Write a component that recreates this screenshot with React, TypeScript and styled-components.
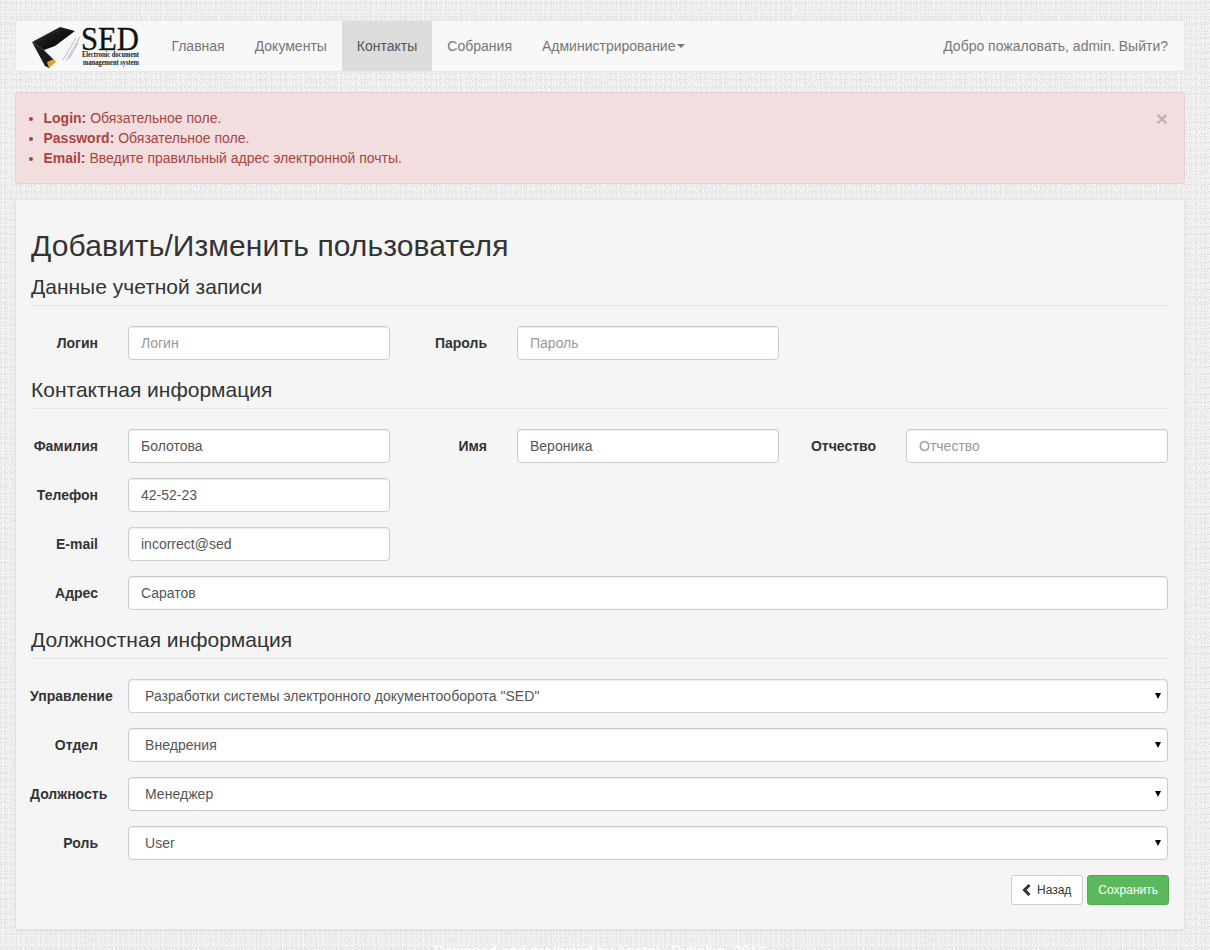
import React from 'react';
import styled, { createGlobalStyle } from 'styled-components';

// one pixel per tile, the tile sizes are co-prime so the dots never line up
const dot = (color: string) => `conic-gradient(from 270deg at 1px 1px, ${color} 25%, transparent 0)`;

const GlobalStyle = createGlobalStyle`
  html, body {
    margin: 0;
    padding: 0;
  }
  body {
    font-family: "Liberation Sans", Arial, sans-serif;
    font-size: 14px;
    line-height: 20px;
    color: #333;
    background-color: #eeeeef;
    background-image:
      ${dot('#fbfbfb')}, ${dot('#dcdce0')}, ${dot('#f8f8f9')}, ${dot('#dedee2')},
      ${dot('#fdfdfd')}, ${dot('#e0e0e3')}, ${dot('#f6f6f7')}, ${dot('#d9d9dd')};
    background-size:
      3px 5px, 5px 3px, 7px 3px, 3px 7px,
      4px 5px, 5px 4px, 7px 5px, 5px 7px;
    background-position:
      0 0, 1px 1px, 2px 1px, 1px 3px,
      2px 2px, 0 2px, 3px 4px, 4px 2px;
  }
  * {
    box-sizing: border-box;
  }
`;

const Viewport = styled.div`
  height: 950px;
  overflow: hidden;
`;

const Container = styled.div`
  width: 1170px;
  margin-left: 15px;
  padding-top: 20px;
`;

const Navbar = styled.nav`
  display: flex;
  align-items: stretch;
  justify-content: space-between;
  height: 52px;
  background: #f8f8f8;
  border: 1px solid #e7e7e7;
  border-radius: 4px;
  margin-bottom: 20px;
`;

const NavLeft = styled.div`
  display: flex;
  align-items: stretch;
`;

const Brand = styled.a`
  display: block;
  width: 140.4px;
  height: 50px;
`;

const NavItem = styled.a<{ $active?: boolean }>`
  display: flex;
  align-items: center;
  padding: 0 15px;
  color: ${(p) => (p.$active ? '#555' : '#777')};
  background: ${(p) => (p.$active ? '#dcdcdc' : 'transparent')};
`;

const Caret = styled.span`
  display: inline-block;
  width: 0;
  height: 0;
  margin-left: 2px;
  border-top: 4px solid #777;
  border-left: 4px solid transparent;
  border-right: 4px solid transparent;
`;

const NavRight = styled.div`
  display: flex;
  align-items: center;
  padding-right: 16px;
  color: #777;
`;

const Alert = styled.div`
  display: flex;
  justify-content: space-between;
  padding: 15px 16px 15px 15px;
  height: 92px;
  background: #f2dede;
  border: 1px solid #ebccd1;
  border-radius: 4px;
  color: #a94442;
  margin-bottom: 14px;
`;

const ErrorList = styled.ul`
  margin: 0;
  padding-left: 12.5px;
`;

const CloseButton = styled.button`
  padding: 0;
  border: 0;
  background: transparent;
  height: 21px;
  font-family: "Liberation Sans", Arial, sans-serif;
  font-size: 21px;
  line-height: 21px;
  font-weight: bold;
  color: #000;
  opacity: 0.2;
  text-shadow: 0 1px 0 #fff;
`;

const Well = styled.div`
  height: 732px;
  padding: 30px 16px 0 14px;
  background: #f5f5f5;
  border: 1px solid #e3e3e3;
  border-radius: 4px;
  box-shadow: inset 0 1px 1px rgba(0, 0, 0, 0.05), 0 1px 2px rgba(0, 0, 0, 0.08);
`;

const PageTitle = styled.h1`
  margin: 0 0 13px;
  padding-left: 1px;
  font-size: 30px;
  line-height: 33px;
  font-weight: 500;
  letter-spacing: 0.1px;
  color: #333;
`;

const Legend = styled.div`
  height: 31px;
  margin: 18px 0 20px 1px;
  font-size: 21px;
  line-height: 24px;
  color: #333;
  border-bottom: 1px solid #e5e5e5;

  &:first-of-type {
    margin-top: 0;
  }
`;

const Row = styled.div`
  display: grid;
  grid-template-columns: repeat(3, 360px);
  column-gap: 29px;
  margin-bottom: 15px;
`;

const Field = styled.div<{ $wide?: boolean }>`
  display: grid;
  grid-template-columns: 68px 1fr;
  column-gap: 30px;
  grid-column: ${(p) => (p.$wide ? '1 / -1' : 'auto')};
`;

const Label = styled.label`
  padding-top: 7px;
  text-align: right;
  font-weight: bold;
  white-space: nowrap;
`;

const Input = styled.input`
  display: block;
  width: 100%;
  height: 34px;
  padding: 6px 12px;
  font-family: "Liberation Sans", Arial, sans-serif;
  font-size: 14px;
  line-height: 20px;
  color: #555;
  background: #fff;
  border: 1px solid #ccc;
  border-radius: 4px;
  box-shadow: inset 0 1px 1px rgba(0, 0, 0, 0.075);

  &::placeholder {
    color: #999;
    opacity: 1;
  }
`;

const SelectWrap = styled.div`
  position: relative;

  &::after {
    content: '';
    position: absolute;
    right: 7px;
    top: 14px;
    border-top: 6px solid #000;
    border-left: 3.5px solid transparent;
    border-right: 3.5px solid transparent;
    pointer-events: none;
  }
`;

const Select = styled.select`
  display: block;
  width: 100%;
  height: 34px;
  padding: 6px 12px 6px 16px;
  appearance: none;
  font-family: "Liberation Sans", Arial, sans-serif;
  font-size: 14px;
  line-height: 20px;
  letter-spacing: 0.04px;
  color: #555;
  background-color: #fff;
  border: 1px solid #ccc;
  border-radius: 4px;
  box-shadow: inset 0 1px 1px rgba(0, 0, 0, 0.075);
`;

const Actions = styled.div`
  display: flex;
  justify-content: flex-end;
  gap: 4px;
  margin-right: -1px;
`;

const Button = styled.button<{ $primary?: boolean }>`
  display: inline-flex;
  align-items: center;
  height: 30px;
  padding: 5px 10px;
  font-family: "Liberation Sans", Arial, sans-serif;
  font-size: 12px;
  line-height: 18px;
  color: ${(p) => (p.$primary ? '#fff' : '#333')};
  background: ${(p) => (p.$primary ? '#5cb85c' : '#fff')};
  border: 1px solid ${(p) => (p.$primary ? '#4cae4c' : '#ccc')};
  border-radius: 3px;
`;

const BackButton = styled(Button)`
  padding-right: 11px;
`;

const BackIcon = styled.svg`
  width: 10px;
  height: 12px;
  margin-right: 5px;
`;

const Footer = styled.div`
  margin-top: 11px;
  text-align: center;
  font-size: 15px;
  color: #fff;
`;

const Logo = () => (
  <svg width="140" height="50" viewBox="0 0 140 50">
    <defs>
      <linearGradient id="cover" x1="0" y1="0" x2="1" y2="1">
        <stop offset="0" stopColor="#777" />
        <stop offset="0.4" stopColor="#1a1a1a" />
        <stop offset="1" stopColor="#000" />
      </linearGradient>
    </defs>
    <path d="M16 21 L44 6 L59 10 L39 25 L28 29 Z" fill="url(#cover)" />
    <path d="M16 21 L28 29 L38 39 L33 47 L29 45 Z" fill="#1c1c1c" />
    <path d="M29 30 L56 19 L47 39 L38 38 Z" fill="#f6f6f6" />
    <path d="M47 39 L60 17 M50 40 L64 16 M53 38 L62 22" fill="none" stroke="#aebccd" strokeWidth="1" />
    <path d="M31 41 L38 38 L40 41 L33 47 Z" fill="#d9a532" />
    <text x="65" y="29" fontFamily='"Liberation Serif", serif' fontSize="33" fill="#111" stroke="#111" strokeWidth="0.3" textLength="58" lengthAdjust="spacingAndGlyphs">SED</text>
    <text x="66" y="36" fontFamily='"Liberation Serif", serif' fontSize="7.5" fontWeight="bold" fill="#222" textLength="57" lengthAdjust="spacingAndGlyphs">Electronic document</text>
    <text x="67" y="44" fontFamily='"Liberation Serif", serif' fontSize="7.5" fontWeight="bold" fill="#222" textLength="56" lengthAdjust="spacingAndGlyphs">management system</text>
  </svg>
);

export default function App() {
  return (
    <Viewport>
      <GlobalStyle />
      <Container>
        <Navbar>
          <NavLeft>
            <Brand>
              <Logo />
            </Brand>
            <NavItem>Главная</NavItem>
            <NavItem>Документы</NavItem>
            <NavItem $active>Контакты</NavItem>
            <NavItem>Собрания</NavItem>
            <NavItem>
              Администрирование
              <Caret />
            </NavItem>
          </NavLeft>
          <NavRight>Добро пожаловать, admin. Выйти?</NavRight>
        </Navbar>

        <Alert>
          <ErrorList>
            <li><strong>Login:</strong> Обязательное поле.</li>
            <li><strong>Password:</strong> Обязательное поле.</li>
            <li><strong>Email:</strong> Введите правильный адрес электронной почты.</li>
          </ErrorList>
          <CloseButton>×</CloseButton>
        </Alert>

        <Well>
          <PageTitle>Добавить/Изменить пользователя</PageTitle>

          <Legend>Данные учетной записи</Legend>
          <Row>
            <Field>
              <Label>Логин</Label>
              <Input placeholder="Логин" />
            </Field>
            <Field>
              <Label>Пароль</Label>
              <Input placeholder="Пароль" />
            </Field>
          </Row>

          <Legend>Контактная информация</Legend>
          <Row>
            <Field>
              <Label>Фамилия</Label>
              <Input defaultValue="Болотова" />
            </Field>
            <Field>
              <Label>Имя</Label>
              <Input defaultValue="Вероника" />
            </Field>
            <Field>
              <Label>Отчество</Label>
              <Input placeholder="Отчество" />
            </Field>
          </Row>
          <Row>
            <Field>
              <Label>Телефон</Label>
              <Input defaultValue="42-52-23" />
            </Field>
          </Row>
          <Row>
            <Field>
              <Label>E-mail</Label>
              <Input defaultValue="incorrect@sed" />
            </Field>
          </Row>
          <Row>
            <Field $wide>
              <Label>Адрес</Label>
              <Input defaultValue="Саратов" />
            </Field>
          </Row>

          <Legend>Должностная информация</Legend>
          <Row>
            <Field $wide>
              <Label>Управление</Label>
              <SelectWrap>
                <Select defaultValue="a">
                  <option value="a">Разработки системы электронного документооборота "SED"</option>
                </Select>
              </SelectWrap>
            </Field>
          </Row>
          <Row>
            <Field $wide>
              <Label>Отдел</Label>
              <SelectWrap>
                <Select defaultValue="a">
                  <option value="a">Внедрения</option>
                </Select>
              </SelectWrap>
            </Field>
          </Row>
          <Row>
            <Field $wide>
              <Label>Должность</Label>
              <SelectWrap>
                <Select defaultValue="a">
                  <option value="a">Менеджер</option>
                </Select>
              </SelectWrap>
            </Field>
          </Row>
          <Row>
            <Field $wide>
              <Label>Роль</Label>
              <SelectWrap>
                <Select defaultValue="a">
                  <option value="a">User</option>
                </Select>
              </SelectWrap>
            </Field>
          </Row>

          <Actions>
            <BackButton>
              <BackIcon viewBox="0 0 10 12">
                <path d="M7.5 1 L2.5 6 L7.5 11" fill="none" stroke="#333" strokeWidth="3" />
              </BackIcon>
              Назад
            </BackButton>
            <Button $primary>Сохранить</Button>
          </Actions>
        </Well>

        <Footer>Designed and produced by Anatoly Rybalko, 2016</Footer>
      </Container>
    </Viewport>
  );
}
